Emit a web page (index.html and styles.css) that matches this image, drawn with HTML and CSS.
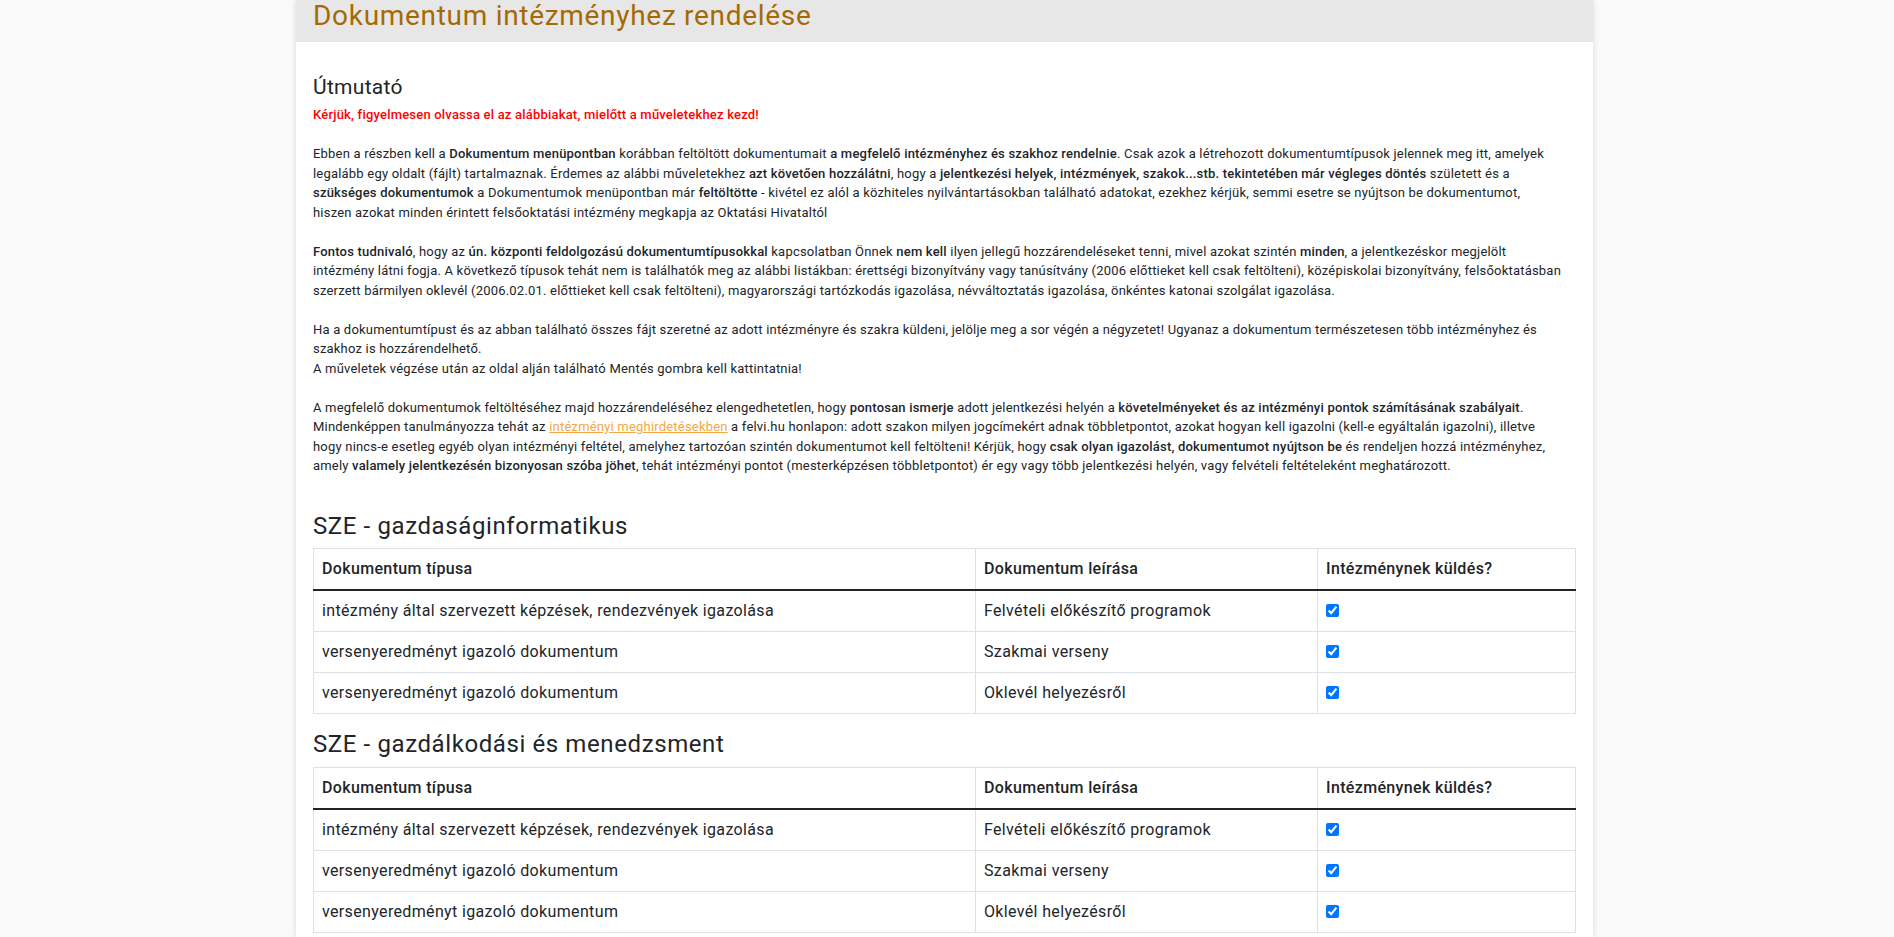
FILE: index.html
```html
<!DOCTYPE html>
<html lang="hu">
<head>
<meta charset="utf-8">
<title>Dokumentum intézményhez rendelése</title>
<link rel="stylesheet" href="styles.css">
</head>
<body>
<div class="page">
  <div class="card">
    <div class="card-header">
      <h2 class="title">Dokumentum intézményhez rendelése</h2>
    </div>
    <div class="card-body">
      <h5 class="guide-title">Útmutató</h5>
      <p class="guide"><span class="red">Kérjük, figyelmesen olvassa el az alábbiakat, mielőtt a műveletekhez kezd!</span><br><br>Ebben a részben kell a <b>Dokumentum menüpontban</b> korábban feltöltött dokumentumait <b>a megfelelő intézményhez és szakhoz rendelnie</b>. Csak azok a létrehozott dokumentumtípusok jelennek meg itt, amelyek<br>legalább egy oldalt (fájlt) tartalmaznak. Érdemes az alábbi műveletekhez <b>azt követően hozzálátni</b>, hogy a <b>jelentkezési helyek, intézmények, szakok...stb. tekintetében már végleges döntés</b> született és a<br><b>szükséges dokumentumok</b> a Dokumentumok menüpontban már <b>feltöltötte</b> - kivétel ez alól a közhiteles nyilvántartásokban található adatokat, ezekhez kérjük, semmi esetre se nyújtson be dokumentumot,<br>hiszen azokat minden érintett felsőoktatási intézmény megkapja az Oktatási Hivataltól<br><br><b>Fontos tudnivaló</b>, hogy az <b>ún. központi feldolgozású dokumentumtípusokkal</b> kapcsolatban Önnek <b>nem kell</b> ilyen jellegű hozzárendeléseket tenni, mivel azokat szintén <b>minden</b>, a jelentkezéskor megjelölt<br>intézmény látni fogja. A következő típusok tehát nem is találhatók meg az alábbi listákban: érettségi bizonyítvány vagy tanúsítvány (2006 előttieket kell csak feltölteni), középiskolai bizonyítvány, felsőoktatásban<br>szerzett bármilyen oklevél (2006.02.01. előttieket kell csak feltölteni), magyarországi tartózkodás igazolása, névváltoztatás igazolása, önkéntes katonai szolgálat igazolása.<br><br>Ha a dokumentumtípust és az abban található összes fájt szeretné az adott intézményre és szakra küldeni, jelölje meg a sor végén a négyzetet! Ugyanaz a dokumentum természetesen több intézményhez és<br>szakhoz is hozzárendelhető.<br>A műveletek végzése után az oldal alján található Mentés gombra kell kattintatnia!<br><br>A megfelelő dokumentumok feltöltéséhez majd hozzárendeléséhez elengedhetetlen, hogy <b>pontosan ismerje</b> adott jelentkezési helyén a <b>követelményeket és az intézményi pontok számításának szabályait</b>.<br>Mindenképpen tanulmányozza tehát az <a class="link" href="#">intézményi meghirdetésekben</a> a felvi.hu honlapon: adott szakon milyen jogcímekért adnak többletpontot, azokat hogyan kell igazolni (kell-e egyáltalán igazolni), illetve<br>hogy nincs-e esetleg egyéb olyan intézményi feltétel, amelyhez tartozóan szintén dokumentumot kell feltölteni! Kérjük, hogy <b>csak olyan igazolást, dokumentumot nyújtson be</b> és rendeljen hozzá intézményhez,<br>amely <b>valamely jelentkezésén bizonyosan szóba jöhet</b>, tehát intézményi pontot (mesterképzésen többletpontot) ér egy vagy több jelentkezési helyén, vagy felvételi feltételeként meghatározott.</p>

      <h4 class="section-title">SZE - gazdaságinformatikus</h4>
      <table class="doc-table">
        <colgroup><col class="c1"><col class="c2"><col class="c3"></colgroup>
        <thead>
          <tr><th>Dokumentum típusa</th><th>Dokumentum leírása</th><th>Intézménynek küldés?</th></tr>
        </thead>
        <tbody>
          <tr><td>intézmény által szervezett képzések, rendezvények igazolása</td><td>Felvételi előkészítő programok</td><td><input type="checkbox" class="chk" checked></td></tr>
          <tr><td>versenyeredményt igazoló dokumentum</td><td>Szakmai verseny</td><td><input type="checkbox" class="chk" checked></td></tr>
          <tr><td>versenyeredményt igazoló dokumentum</td><td>Oklevél helyezésről</td><td><input type="checkbox" class="chk" checked></td></tr>
        </tbody>
      </table>

      <h4 class="section-title">SZE - gazdálkodási és menedzsment</h4>
      <table class="doc-table">
        <colgroup><col class="c1"><col class="c2"><col class="c3"></colgroup>
        <thead>
          <tr><th>Dokumentum típusa</th><th>Dokumentum leírása</th><th>Intézménynek küldés?</th></tr>
        </thead>
        <tbody>
          <tr><td>intézmény által szervezett képzések, rendezvények igazolása</td><td>Felvételi előkészítő programok</td><td><input type="checkbox" class="chk" checked></td></tr>
          <tr><td>versenyeredményt igazoló dokumentum</td><td>Szakmai verseny</td><td><input type="checkbox" class="chk" checked></td></tr>
          <tr><td>versenyeredményt igazoló dokumentum</td><td>Oklevél helyezésről</td><td><input type="checkbox" class="chk" checked></td></tr>
        </tbody>
      </table>
    </div>
  </div>
</div>
</body>
</html>
```
FILE: styles.css
```css
html, body {
  margin: 0;
  padding: 0;
}
body {
  background: #fafafa;
  font-family: Roboto, "Liberation Sans", sans-serif;
  color: #212529;
}
.page {
  width: 1297px;
  margin-left: calc(50% - 651px);
}
.card {
  background: #ffffff;
  box-shadow: 0 0 6px rgba(0, 0, 0, 0.14);
  min-height: 937px;
}
.card-header {
  background: #e7e7e7;
  height: 42px;
  padding: 0 17px;
  box-sizing: border-box;
}
.title {
  margin: 0;
  font-size: 28px;
  line-height: 31px;
  font-weight: 400;
  letter-spacing: 0.7px;
  color: #a66a05;
}
.card-body {
  padding: 33px 17px 0 17px;
}
.guide-title {
  margin: 0 0 6px 0;
  font-size: 21px;
  line-height: 24px;
  font-weight: 400;
  letter-spacing: 0.3px;
}
.guide {
  margin: 0 0 36px 0;
  font-size: 13px;
  line-height: 19.5px;
  letter-spacing: 0.2px;
  white-space: nowrap;
}
.guide b {
  font-weight: 500;
}
.red {
  color: #ff0000;
  font-weight: 500;
}
.link {
  color: #f5a742;
  text-decoration: underline;
}
.section-title {
  margin: 0 0 8px 0;
  font-size: 24px;
  line-height: 28.8px;
  font-weight: 400;
  letter-spacing: 0.6px;
}
.doc-table {
  width: 100%;
  border-collapse: collapse;
  table-layout: fixed;
  margin-bottom: 16px;
  font-size: 16px;
  line-height: 24px;
  letter-spacing: 0.35px;
}
.c1 { width: 662px; }
.c2 { width: 342px; }
.c3 { width: auto; }
.doc-table th,
.doc-table td {
  border: 1px solid #dee2e6;
  padding: 8px;
  text-align: left;
  vertical-align: top;
}
.doc-table th {
  font-weight: 500;
}
.doc-table thead th {
  border-bottom: 2px solid #212529;
}
.chk {
  margin: 0;
  width: 13px;
  height: 13px;
  vertical-align: -1px;
}
```
